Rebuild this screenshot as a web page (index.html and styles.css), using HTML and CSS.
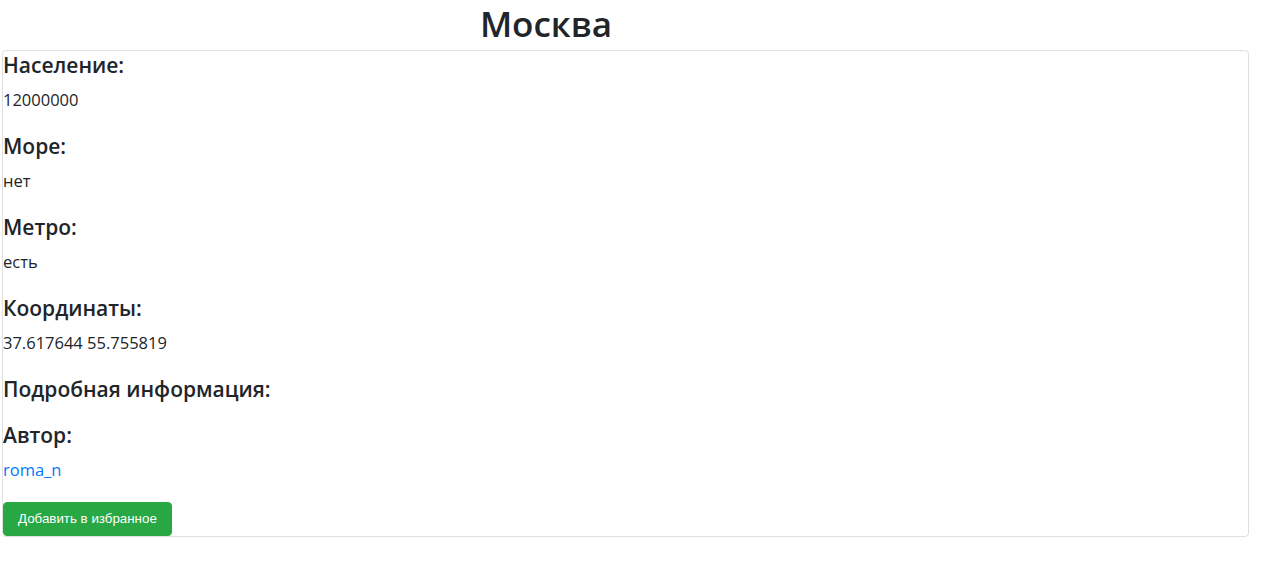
FILE: index.html
```html
<!DOCTYPE html>
<html lang="ru">
<head>
<meta charset="utf-8">
<title>Москва</title>
<link rel="stylesheet" href="styles.css">
</head>
<body>
<div class="title-wrap">
  <h1 class="title">Москва</h1>
</div>
<div class="card">
  <h4 class="label">Население:</h4>
  <p class="value">12000000</p>
  <h4 class="label">Море:</h4>
  <p class="value">нет</p>
  <h4 class="label">Метро:</h4>
  <p class="value">есть</p>
  <h4 class="label">Координаты:</h4>
  <p class="value">37.617644 55.755819</p>
  <h4 class="label label-empty">Подробная информация:</h4>
  <h4 class="label">Автор:</h4>
  <p class="value"><a class="author" href="#">roma_n</a></p>
  <div class="actions">
    <button class="btn-fav" type="button">Добавить в избранное</button>
  </div>
</div>
</body>
</html>
```

FILE: styles.css
```css
* { box-sizing: border-box; }

body {
  margin: 0;
  font-family: "Open Sans", "Noto Sans", sans-serif;
  font-size: 16px;
  line-height: 1.5;
  color: #212529;
  background: #fff;
}

.title-wrap {
  width: 1092px;
  text-align: center;
}

.title {
  margin: 0;
  font-size: 35px;
  font-weight: 600;
  line-height: 48px;
}

.card {
  margin: 2px 18px 0 2px;
  border: 1px solid rgba(0, 0, 0, 0.125);
  border-radius: 4px;
  display: flex;
  flex-direction: column;
  align-items: flex-start;
}

.label {
  margin: 0 0 8px;
  font-size: 21px;
  font-weight: 600;
  line-height: 28.8px;
}

.label-empty {
  margin-bottom: 17px;
}

.value {
  margin: 0 0 20.2px;
  font-size: 16.5px;
  line-height: 24px;
}

.author {
  color: #007bff;
  text-decoration: none;
}

.actions {
  display: flex;
}

.btn-fav {
  font-family: "Liberation Sans", Arial, sans-serif;
  font-size: 13.33px;
  line-height: 20px;
  padding: 6px 14px;
  color: #fff;
  background: #28a745;
  border: 1px solid #28a745;
  border-radius: 4px;
}
```
